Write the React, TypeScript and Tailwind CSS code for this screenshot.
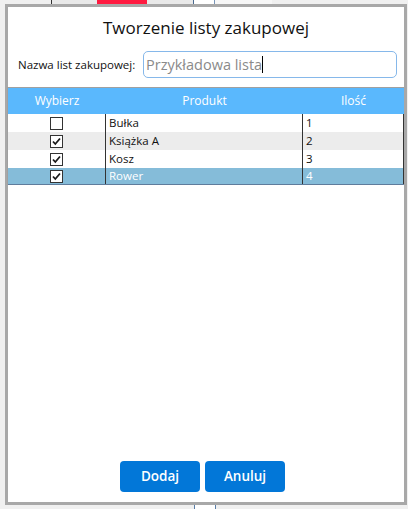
import React from 'react';

interface Item {
  name: string;
  qty: number;
  checked: boolean;
}

const items: Item[] = [
  { name: 'Bułka', qty: 1, checked: false },
  { name: 'Książka A', qty: 2, checked: true },
  { name: 'Kosz', qty: 3, checked: true },
  { name: 'Rower', qty: 4, checked: true },
];

function CheckBox({ checked }: { checked: boolean }) {
  return (
    <div className="w-[13px] h-[13px] border border-[#333333] bg-white flex items-center justify-center">
      {checked && (
        <svg width="11" height="11" viewBox="0 0 11 11">
          <path d="M2 5.5 L4.3 8 L9 2.5" fill="none" stroke="#1a1a1a" strokeWidth="1.8" />
        </svg>
      )}
    </div>
  );
}

export default function App() {
  return (
    <div
      className="w-[408px] h-[509px] bg-[#f0f0f0] overflow-hidden flex flex-col"
      style={{ fontFamily: '"Open Sans", "Noto Sans", sans-serif' }}
    >
      {/* strip of the window behind */}
      <div className="h-[4px] flex shrink-0">
        <div className="w-[51px] bg-[#f0f0f0]" />
        <div className="w-[1px] bg-[#333333]" />
        <div className="w-[45px] bg-[#e9e9e9]" />
        <div className="w-[50px] bg-[#ff1a40]" />
        <div className="w-[46px] bg-[#e9e9e9]" />
        <div className="w-[1px] bg-[#4a6a90]" />
        <div className="w-[20px] bg-white" />
        <div className="w-[1px] bg-[#7a96b8]" />
        <div className="w-[57px] bg-[#f7f7f7]" />
        <div className="flex-1 bg-[#f0f0f0]" />
      </div>

      <div className="ml-[5px] w-[402px] h-[501px] shrink-0 border-[3px] border-[#a8a8a8] bg-white flex flex-col">
        <h1 className="text-center text-[17px] text-[#111] mt-[8px] leading-[26px]">Tworzenie listy zakupowej</h1>

        <div className="flex items-center mt-[10px] pl-[10px] pr-[7px]">
          <span className="text-[11.5px] text-[#111] w-[125px]">Nazwa list zakupowej:</span>
          <div className="flex-1 h-[27px] border border-[#86b8ea] rounded-[5px] flex items-center pl-[2px]">
            <span className="text-[14.5px] text-[#8a8a8a]">Przykładowa lista</span>
            <span className="w-[1px] h-[17px] bg-black" />
          </div>
        </div>

        <div className="mt-[9px] -ml-[1px] border-t border-l border-[#a0a0a0]">
          <div className="flex h-[26px] bg-[#5ab8fd] text-white text-[12px] items-center">
            <div className="w-[98px] text-center">Wybierz</div>
            <div className="w-[197px] text-center">Produkt</div>
            <div className="flex-1 text-center">Ilość</div>
          </div>
          <div className="border-b border-[#5f7c9c]">
            {items.map((item, idx) => {
              const selected = idx === items.length - 1;
              const bg = selected ? 'bg-[#85bcd9]' : idx % 2 === 1 ? 'bg-[#ececec]' : 'bg-white';
              return (
                <div key={item.name} className={`flex ${bg} ${selected ? 'h-[16px]' : 'h-[18px]'} text-[11.5px] ${selected ? 'text-white' : 'text-[#111]'}`}>
                  <div className="w-[98px] flex justify-center items-center border-r border-[#333333]">
                    <CheckBox checked={item.checked} />
                  </div>
                  <div className="w-[197px] pl-[3px] flex items-center border-r border-[#333333]">{item.name}</div>
                  <div className="flex-1 pl-[3px] flex items-center border-r border-[#333333]">{item.qty}</div>
                </div>
              );
            })}
          </div>
        </div>

        <div className="flex-1" />

        <div className="flex justify-center gap-[5px] mb-[10px] mr-[7px]">
          <button className="w-[80px] h-[31px] rounded-[4px] bg-[#0277d8] text-white text-[13.5px] font-semibold">Dodaj</button>
          <button className="w-[80px] h-[31px] rounded-[4px] bg-[#0277d8] text-white text-[13.5px] font-semibold">Anuluj</button>
        </div>
      </div>

      <div className="flex-1 flex">
        <div className="w-[194px]" />
        <div className="w-[1px] bg-[#5a7ea8]" />
        <div className="w-[20px] bg-white" />
        <div className="w-[1px] bg-[#5a7ea8]" />
      </div>
    </div>
  );
}
